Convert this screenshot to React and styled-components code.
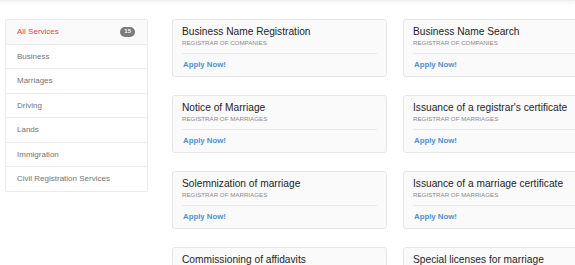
import styled, { createGlobalStyle } from 'styled-components';

const GlobalStyle = createGlobalStyle`
  html, body {
    margin: 0;
    padding: 0;
    background: #fff;
    overflow: hidden;
    font-family: "Liberation Sans", Arial, sans-serif;
  }
`;

const TopBar = styled.div`
  height: 1px;
  background: #f0f0f0;
  box-shadow: 0 1px 3px rgba(0, 0, 0, 0.12);
`;

const Page = styled.div`
  display: flex;
  align-items: flex-start;
  gap: 24px;
  padding: 18px 0 0 5px;
  width: 700px;
`;

const Sidebar = styled.ul`
  list-style: none;
  margin: 0;
  padding: 0;
  width: 143px;
  flex-shrink: 0;
  border: 1px solid #ebebeb;
  border-radius: 2px;
  box-sizing: border-box;
`;

const SideItem = styled.li`
  display: flex;
  align-items: center;
  justify-content: space-between;
  height: 23.5px;
  padding: 0 12px 0 11px;
  font-size: 8px;
  color: ${(p) => (p.active ? '#e9424c' : '#747474')};
  background: ${(p) => (p.active ? '#fafafa' : '#fff')};
  border-top: ${(p) => (p.first ? 'none' : '1px solid #ededed')};
`;

const Badge = styled.span`
  background: #7b7b7b;
  color: #fff;
  font-size: 6px;
  font-weight: bold;
  border-radius: 5px;
  padding: 1.5px 4px;
  line-height: 7px;
`;

const Grid = styled.div`
  display: grid;
  grid-template-columns: 215px 215px;
  column-gap: 16px;
  row-gap: 18px;
`;

const Card = styled.div`
  background: #fafafa;
  border: 1px solid #e6e6e6;
  border-radius: 3px;
  padding: 5px 9px 9px 9px;
  height: 58px;
  box-sizing: border-box;
`;

const Title = styled.div`
  font-size: 10.2px;
  color: #1e1e1e;
  line-height: 13px;
`;

const Subtitle = styled.div`
  font-size: 6.2px;
  color: #8a8a8a;
  text-transform: uppercase;
  line-height: 9px;
`;

const Divider = styled.div`
  height: 1px;
  background: #e8e8e8;
  margin: 6px 0 6px 0;
`;

const Apply = styled.a`
  display: block;
  font-size: 7.8px;
  font-weight: bold;
  color: #4a90d9;
  text-decoration: none;
  padding-left: 1px;
  line-height: 10px;
`;

const categories = [
  'All Services',
  'Business',
  'Marriages',
  'Driving',
  'Lands',
  'Immigration',
  'Civil Registration Services',
];

const services = [
  { title: 'Business Name Registration', org: 'Registrar of Companies' },
  { title: 'Business Name Search', org: 'Registrar of Companies' },
  { title: 'Notice of Marriage', org: 'Registrar of Marriages' },
  { title: "Issuance of a registrar's certificate", org: 'Registrar of Marriages' },
  { title: 'Solemnization of marriage', org: 'Registrar of Marriages' },
  { title: 'Issuance of a marriage certificate', org: 'Registrar of Marriages' },
  { title: 'Commissioning of affidavits', org: 'Registrar of Marriages' },
  { title: 'Special licenses for marriage', org: 'Registrar of Marriages' },
];

export default function App() {
  return (
    <>
      <GlobalStyle />
      <TopBar />
      <Page>
        <Sidebar>
          {categories.map((c, i) => (
            <SideItem key={c} active={i === 0} first={i === 0}>
              {c}
              {i === 0 && <Badge>15</Badge>}
            </SideItem>
          ))}
        </Sidebar>
        <Grid>
          {services.map((s) => (
            <Card key={s.title}>
              <Title>{s.title}</Title>
              <Subtitle>{s.org}</Subtitle>
              <Divider />
              <Apply href="#">Apply Now!</Apply>
            </Card>
          ))}
        </Grid>
      </Page>
    </>
  );
}
